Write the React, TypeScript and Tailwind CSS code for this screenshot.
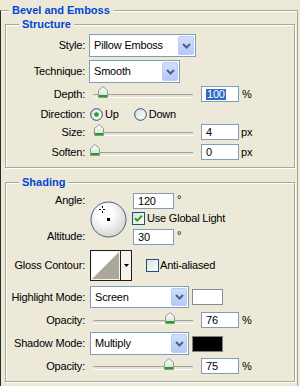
import React from "react";

function Chevron() {
  return (
    <svg width="9" height="6" viewBox="0 0 9 6">
      <path d="M1 1 L4.5 4.5 L8 1" fill="none" stroke="#4D6185" strokeWidth="2" />
    </svg>
  );
}

function Combo({ text, className }: { text: string; className: string }) {
  return (
    <div className={`flex items-stretch border border-[#7F9DB9] bg-white p-[1px] ${className}`}>
      <div className="flex flex-1 items-center pl-[3px]">{text}</div>
      <div className="flex w-[16px] items-center justify-center rounded-[2px] border border-[#BACBF5] bg-[linear-gradient(180deg,#D2DEFC,#B6C9F7)]">
        <Chevron />
      </div>
    </div>
  );
}

function Field({ children, className = "", selected = false }: { children: React.ReactNode; className?: string; selected?: boolean }) {
  return (
    <div className={`flex h-[16px] items-center border border-[#7F9DB9] bg-white pl-[4px] ${className}`}>
      {selected ? (
        <span className="bg-[#316AC5] px-[1px] leading-[11px] text-white">{children}</span>
      ) : (
        <span>{children}</span>
      )}
    </div>
  );
}

function Thumb() {
  return (
    <svg width="10" height="12" viewBox="0 0 10 12">
      <defs>
        <linearGradient id="thumbg" x1="0" y1="0" x2="0" y2="1">
          <stop offset="0" stopColor="#FFFFFF" />
          <stop offset="1" stopColor="#DADAD2" />
        </linearGradient>
      </defs>
      <path d="M0.5 11.5V4.5L5 0.5L9.5 4.5V11.5Z" fill="url(#thumbg)" stroke="#8E9A8E" />
      <rect x="1" y="9" width="8" height="2" fill="#21A121" />
    </svg>
  );
}

function Slider({ thumb }: { thumb: number }) {
  return (
    <div className="relative h-[16px] w-[108px]">
      <div className="absolute left-[4px] top-[8px] h-[3px] w-[100px] rounded-l-full border-t border-[#A5A397] bg-[#E4E2D8] shadow-[0_1px_0_#fff]" />
      <div className="absolute top-0 flex" style={{ left: thumb }}>
        <Thumb />
      </div>
    </div>
  );
}

function Radio({ checked }: { checked?: boolean }) {
  return (
    <svg width="13" height="13" viewBox="0 0 13 13">
      <defs>
        <linearGradient id="radg" x1="0" y1="0" x2="1" y2="1">
          <stop offset="0" stopColor="#DCDCD7" />
          <stop offset="1" stopColor="#FFFFFF" />
        </linearGradient>
      </defs>
      <circle cx="6.5" cy="6.5" r="5.8" fill="url(#radg)" stroke="#1C5180" />
      {checked && <circle cx="6.5" cy="6.5" r="2.3" fill="#21A121" />}
    </svg>
  );
}

function Check({ checked }: { checked?: boolean }) {
  return (
    <svg width="13" height="13" viewBox="0 0 13 13">
      <defs>
        <linearGradient id="chkg" x1="0" y1="0" x2="1" y2="1">
          <stop offset="0" stopColor="#DCDCD7" />
          <stop offset="1" stopColor="#FFFFFF" />
        </linearGradient>
      </defs>
      <rect x="0.5" y="0.5" width="12" height="12" fill="url(#chkg)" stroke="#1C5180" />
      {checked && <path d="M3 6.2 L5.3 8.6 L10 3.6" fill="none" stroke="#21A121" strokeWidth="2" />}
    </svg>
  );
}

function Dial() {
  return (
    <svg width="37" height="37" viewBox="0 0 37 37">
      <defs>
        <radialGradient id="dialg" cx="0.4" cy="0.35" r="0.7">
          <stop offset="0.3" stopColor="#FFFFFF" />
          <stop offset="1" stopColor="#D2D2CE" />
        </radialGradient>
      </defs>
      <circle cx="18.5" cy="18.5" r="17.5" fill="url(#dialg)" stroke="#4A6186" />
      <path d="M9 8.5H11M13 8.5H15M12.5 5V7M12.5 10V12" stroke="#000" strokeWidth="1" />
      <rect x="17" y="17" width="3" height="3" fill="#000" />
    </svg>
  );
}

function ContourBox() {
  return (
    <div className="flex h-[31px] w-[42px] border border-[#1E1E1E] bg-[#F4F3EE]">
      <div className="m-[1px] flex w-[27px] bg-white">
        <svg width="27" height="27" viewBox="0 0 27 27">
          <polygon points="0,27 27,0 27,27" fill="#ACA899" />
        </svg>
      </div>
      <div className="flex flex-1 items-center justify-center border-l border-[#1E1E1E]">
        <svg width="5" height="3" viewBox="0 0 5 3">
          <polygon points="0,0 5,0 2.5,3" fill="#000" />
        </svg>
      </div>
    </div>
  );
}

const groupBox =
  "w-[290px] border border-[#ACA899] shadow-[1px_1px_0_#fff,inset_1px_1px_0_#fff]";
const legend =
  "ml-[13px] bg-[#ECE9D8] px-[3px] text-[11px] font-bold leading-[13px] tracking-normal text-[#0046D5]";

export default function App() {
  return (
    <div className="h-[386px] w-[300px] overflow-hidden bg-[#ECE9D8] font-['Liberation_Sans',Arial,sans-serif] text-[11px] leading-[13px] tracking-[-0.2px] text-black">
      <fieldset className="mt-[4px] w-[298px] border border-[#ACA899] border-l-[#2A2A2A] pb-[20px] shadow-[inset_0_1px_0_#fff]">
        <legend className="ml-[8px] bg-[#ECE9D8] px-[3px] text-[11px] font-bold leading-[13px] tracking-normal text-[#0046D5]">
          Bevel and Emboss
        </legend>

        <fieldset className={`ml-[4px] mt-[1px] pb-[7px] ${groupBox}`}>
          <legend className={legend}>Structure</legend>

          <div className="mt-[3px] flex h-[23px] items-center">
            <div className="w-[79px] text-right">Style:</div>
            <Combo text="Pillow Emboss" className="ml-[4px] h-[23px] w-[107px]" />
          </div>

          <div className="mt-[3px] flex h-[23px] items-center">
            <div className="w-[79px] text-right">Technique:</div>
            <Combo text="Smooth" className="ml-[4px] h-[23px] w-[91px]" />
          </div>

          <div className="mt-[3px] flex h-[16px] items-center">
            <div className="w-[79px] text-right">Depth:</div>
            <div className="ml-[4px]">
              <Slider thumb={9} />
            </div>
            <Field className="ml-[4px] w-[38px]" selected>
              100
            </Field>
            <span className="ml-[3px]">%</span>
          </div>

          <div className="mt-[4px] flex h-[16px] items-center">
            <div className="w-[79px] text-right">Direction:</div>
            <div className="ml-[5px] flex">
              <Radio checked />
            </div>
            <span className="ml-[2px]">Up</span>
            <div className="ml-[15px] flex">
              <Radio />
            </div>
            <span className="ml-[2px]">Down</span>
          </div>

          <div className="mt-[2px] flex h-[16px] items-center">
            <div className="w-[79px] text-right">Size:</div>
            <div className="ml-[4px]">
              <Slider thumb={5} />
            </div>
            <Field className="ml-[4px] w-[38px]">4</Field>
            <span className="ml-[2px]">px</span>
          </div>

          <div className="mt-[4px] flex h-[16px] items-center">
            <div className="w-[79px] text-right">Soften:</div>
            <div className="ml-[4px]">
              <Slider thumb={1} />
            </div>
            <Field className="ml-[4px] w-[38px]">0</Field>
            <span className="ml-[2px]">px</span>
          </div>
        </fieldset>

        <fieldset className={`ml-[4px] mt-[8px] pb-[7px] ${groupBox}`}>
          <legend className={legend}>Shading</legend>

          <div className="mt-[4px] flex h-[52px]">
            <div className="flex w-[79px] flex-col justify-between text-right">
              <div className="mt-[-1px] leading-[16px]">Angle:</div>
              <div className="mb-[1px] leading-[16px]">Altitude:</div>
            </div>
            <div className="ml-[5px] mt-[8px] flex h-[37px]">
              <Dial />
            </div>
            <div className="ml-[5px] flex flex-col">
              <div className="flex items-start">
                <Field className="ml-[1px] w-[41px]">120</Field>
                <span className="ml-[3px] leading-[12px]">°</span>
              </div>
              <div className="mt-[3px] flex h-[13px] items-center">
                <Check checked />
                <span className="ml-[2px]">Use Global Light</span>
              </div>
              <div className="mt-[4px] flex items-start">
                <Field className="ml-[1px] w-[41px]">30</Field>
                <span className="ml-[3px] leading-[12px]">°</span>
              </div>
            </div>
          </div>

          <div className="mt-[5px] flex h-[31px] items-center">
            <div className="w-[79px] text-right">Gloss Contour:</div>
            <div className="ml-[5px] flex">
              <ContourBox />
            </div>
            <div className="ml-[14px] flex">
              <Check />
            </div>
            <span className="ml-[1px]">Anti-aliased</span>
          </div>

          <div className="mt-[5px] flex h-[22px] items-center">
            <div className="w-[79px] text-right">Highlight Mode:</div>
            <Combo text="Screen" className="ml-[5px] h-[22px] w-[99px]" />
            <div className="ml-[3px] h-[16px] w-[31px] border border-[#8A8A8A] bg-white" />
          </div>

          <div className="mt-[4px] flex h-[16px] items-center">
            <div className="w-[79px] text-right">Opacity:</div>
            <div className="ml-[4px]">
              <Slider thumb={76} />
            </div>
            <Field className="ml-[4px] w-[38px]">76</Field>
            <span className="ml-[3px]">%</span>
          </div>

          <div className="mt-[4px] flex h-[23px] items-center">
            <div className="w-[79px] text-right">Shadow Mode:</div>
            <Combo text="Multiply" className="ml-[5px] h-[23px] w-[99px]" />
            <div className="ml-[3px] h-[16px] w-[31px] border border-[#808080] bg-black" />
          </div>

          <div className="mt-[3px] flex h-[16px] items-center">
            <div className="w-[79px] text-right">Opacity:</div>
            <div className="ml-[4px]">
              <Slider thumb={75} />
            </div>
            <Field className="ml-[4px] w-[38px]">75</Field>
            <span className="ml-[3px]">%</span>
          </div>
        </fieldset>
      </fieldset>
    </div>
  );
}
